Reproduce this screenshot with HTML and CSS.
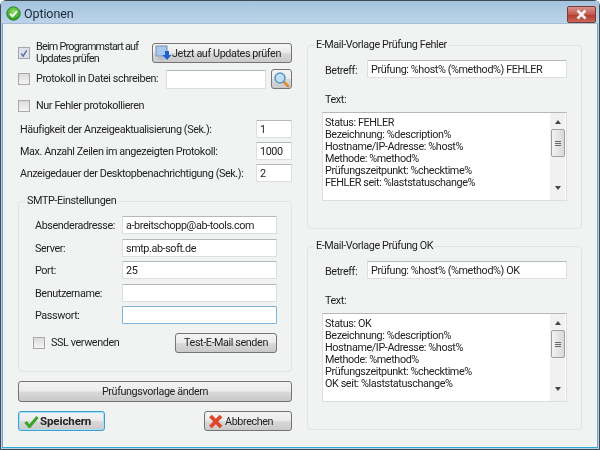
FILE: index.html
```html
<!DOCTYPE html>
<html lang="de">
<head>
<meta charset="utf-8">
<title>Optionen</title>
<link rel="stylesheet" href="styles.css">
</head>
<body>
<div class="window">
  <header class="titlebar">
    <svg class="title-icon" width="15" height="15" viewBox="0 0 17 17"><defs><radialGradient id="g1" cx="50%" cy="35%" r="65%"><stop offset="0" stop-color="#8fe05a"/><stop offset="1" stop-color="#1f9a1f"/></radialGradient></defs><circle cx="8.5" cy="8.5" r="7.6" fill="url(#g1)" stroke="#2b7a2b"/><path d="M4.6 8.8l2.8 2.9 5-6" fill="none" stroke="#fff" stroke-width="2.2"/></svg>
    <span class="title-text">Optionen</span>
    <div class="close-btn"><svg width="13" height="11" viewBox="0 0 13 11"><path d="M2.5 1.500l8 8M10.500 1.500l-8 8" stroke="#f2f2f2" stroke-width="2.600"/></svg></div>
  </header>
  <main class="client">
    <section class="col-left">
      <div class="row row-updates">
        <span class="check checked"><svg width="11" height="11" viewBox="0 0 11 11"><path d="M2.500 5.500l2 3 4-6.500" fill="none" stroke="#5a6ea8" stroke-width="1.500"/></svg></span>
        <span class="label updates-label">Beim Programmstart auf<br>Updates prüfen</span>
        <button class="btn btn-updates"><svg width="17" height="17" viewBox="0 0 17 17"><rect x="1" y="1" width="11" height="10" fill="#a9c8ee" stroke="#7a8fb0"/><rect x="3" y="12" width="7" height="3" fill="#b8bec8"/><path d="M10 6h4v4h2.500l-4.500 5-4.500-5H10z" fill="#1f62d0"/></svg><span>Jetzt auf Updates prüfen</span></button>
      </div>
      <div class="row row-log">
        <span class="check"></span>
        <span class="label log-label">Protokoll in Datei schreiben:</span>
        <div class="input log-input"></div>
        <button class="btn btn-search"><svg width="17" height="17" viewBox="0 0 17 17"><path d="M10.500 10.500l4.500 4.500" stroke="#e08a30" stroke-width="2.600" stroke-linecap="round"/><circle cx="7" cy="7" r="5" fill="#bfe0f5" stroke="#5f93c0" stroke-width="1.500"/></svg></button>
      </div>
      <div class="row row-errors">
        <span class="check"></span>
        <span class="label">Nur Fehler protokollieren</span>
      </div>
      <div class="setting s1"><span class="label">Häufigkeit der Anzeigeaktualisierung (Sek.):</span><div class="input num">1</div></div>
      <div class="setting s2"><span class="label">Max. Anzahl Zeilen im angezeigten Protokoll:</span><div class="input num">1000</div></div>
      <div class="setting s2"><span class="label">Anzeigedauer der Desktopbenachrichtigung (Sek.):</span><div class="input num">2</div></div>
      <fieldset class="group smtp">
        <legend>SMTP-Einstellungen</legend>
        <div class="field"><span class="label">Absenderadresse:</span><div class="input wide">a-breitschopp@ab-tools.com</div></div>
        <div class="field"><span class="label">Server:</span><div class="input wide">smtp.ab-soft.de</div></div>
        <div class="field"><span class="label">Port:</span><div class="input wide">25</div></div>
        <div class="field"><span class="label">Benutzername:</span><div class="input wide"></div></div>
        <div class="field"><span class="label">Passwort:</span><div class="input wide focus"></div></div>
        <div class="ssl-row">
          <span class="check"></span>
          <span class="label">SSL verwenden</span>
          <button class="btn btn-test">Test-E-Mail senden</button>
        </div>
      </fieldset>
      <button class="btn btn-template">Prüfungsvorlage ändern</button>
      <div class="actions">
        <button class="btn btn-save"><svg width="15" height="13" viewBox="0 0 15 13"><path d="M1.500 7l4 4.500 8-9.500" fill="none" stroke="#3aa52d" stroke-width="3"/></svg>Speichern</button>
        <button class="btn btn-cancel"><svg width="15" height="15" viewBox="0 0 15 15"><path d="M2.500 2l10.500 11M13 2L2.500 13" stroke="#e0452a" stroke-width="3.800"/></svg>Abbrechen</button>
      </div>
    </section>
    <section class="col-right">
      <fieldset class="group mail">
        <legend>E-Mail-Vorlage Prüfung Fehler</legend>
        <div class="subject"><span class="label">Betreff:</span><div class="input subject-input">Prüfung: %host% (%method%) FEHLER</div></div>
        <div class="label text-label">Text:</div>
        <div class="memo">
          <div class="memo-text">Status: FEHLER<br>Bezeichnung: %description%<br>Hostname/IP-Adresse: %host%<br>Methode: %method%<br>Prüfungszeitpunkt: %checktime%<br>FEHLER seit: %laststatuschange%</div>
          <div class="scroll"><span class="arrow up"></span><span class="thumb"><i></i><i></i><i></i></span><span class="arrow down"></span></div>
        </div>
      </fieldset>
      <fieldset class="group mail mail-ok">
        <legend>E-Mail-Vorlage Prüfung OK</legend>
        <div class="subject"><span class="label">Betreff:</span><div class="input subject-input">Prüfung: %host% (%method%) OK</div></div>
        <div class="label text-label">Text:</div>
        <div class="memo">
          <div class="memo-text">Status: OK<br>Bezeichnung: %description%<br>Hostname/IP-Adresse: %host%<br>Methode: %method%<br>Prüfungszeitpunkt: %checktime%<br>OK seit: %laststatuschange%</div>
          <div class="scroll"><span class="arrow up"></span><span class="thumb"><i></i><i></i><i></i></span><span class="arrow down"></span></div>
        </div>
      </fieldset>
    </section>
  </main>
</div>
</body>
</html>
```
FILE: styles.css
```css
* { box-sizing: border-box; }
html, body { margin: 0; padding: 0; }
body { width: 600px; height: 450px; overflow: hidden; background: #fff; font-family: Roboto, "Liberation Sans", Arial, sans-serif; font-size: 10.8px; letter-spacing: -0.4px; color: #222; }
.window { width: 600px; height: 450px; display: flex; flex-direction: column; background: #b7d0e8; border: 1px solid #3c4a52; border-radius: 6px 6px 0 0; padding: 0 1px 1px; filter: blur(0.3px); }
.titlebar { height: 22px; flex: none; display: flex; align-items: center; background: linear-gradient(#a5c3de, #bcd4ea); margin: 0 -1px; padding: 0 3px 0 5px; }
.title-icon { margin-right: 3px; margin-top: 2px; }
.title-text { font-size: 12.500px; letter-spacing: -0.1px; color: #1a2a3a; margin-top: 2px; }
.close-btn { margin-left: auto; width: 29px; height: 17px; margin-top: 5px; display: flex; align-items: center; justify-content: center; background: linear-gradient(#d8938b, #c2584c 50%, #b23a2e 55%, #c9685c); border: 1px solid #7a3a36; border-radius: 2px; }
.client { flex: 1; display: flex; gap: 15px; padding: 19px 15px 0 15px; background: #f1f3f3; border: 1px solid #6fa6cf; border-top-color: #a8bdd0; border-bottom-color: #2aa9d8; }
.col-left { width: 274px; flex: none; display: flex; flex-direction: column; }
.col-right { width: 275px; flex: none; display: flex; flex-direction: column; margin-top: -4px; }
.label { white-space: nowrap; line-height: 12px; }
.row { display: flex; align-items: center; }
.check { width: 12px; height: 12px; flex: none; border: 1px solid #a8a8a8; background: linear-gradient(#dcdcdc, #f4f4f4); display: flex; align-items: center; justify-content: center; }
.checked { background: #dde2ea; }
.input { height: 19px; background: #fff; border: 1px solid #dcdfe2; border-top-color: #b4b8bc; border-radius: 1px; padding: 2px 3px 0 3px; line-height: 13px; white-space: nowrap; }
.btn { font: inherit; letter-spacing: inherit; color: #222; padding: 0; height: 20px; white-space: nowrap; display: flex; align-items: center; justify-content: center; background: linear-gradient(#f4f4f4, #ebebeb 48%, #d9d9d9 52%, #c9c9c9); border: 1px solid #757575; border-radius: 3px; }
.row-updates { height: 20px; }
.updates-label { margin-left: 6px; width: 116px; letter-spacing: -0.75px; }
.btn-updates { width: 140px; flex: none; justify-content: flex-start; padding-left: 2px; letter-spacing: -0.4px; }
.btn-updates svg { flex: none; }
.row-log { height: 20px; margin-top: 6px; }
.log-label { margin-left: 6px; width: 130px; }
.log-input { width: 100px; margin-right: 5px; flex: none; }
.btn-search { width: 21px; flex: none; }
.row-errors { height: 14px; margin-top: 10px; }
.row-errors .label { margin-left: 6px; }
.setting { display: flex; align-items: center; justify-content: space-between; padding-left: 2px; height: 18px; }
.setting .label { padding-top: 2px; }
.s1 { margin-top: 7px; }
.s2 { margin-top: 4px; }
.num { width: 36px; height: 18px; }
.group { margin: 0; border: 1px solid #dfe3e6; border-radius: 4px; min-width: 0; }
.group legend { padding: 0 2px; line-height: 12px; }
.smtp { height: 177px; margin-top: 13px; padding: 9px 14px 0 16px; }
.smtp legend { margin-left: -10px; }
.field { display: flex; align-items: center; height: 18px; margin-bottom: 4.500px; }
.field .label { width: 87px; flex: none; padding-top: 2px; }
.wide { width: 155px; height: 18px; }
.focus { border-color: #7fb4d8; }
.ssl-row { display: flex; align-items: center; margin-top: 8.500px; height: 20px; margin-left: -2px; }
.ssl-row .label { margin-left: 6px; }
.btn-test { width: 102px; margin-left: auto; }
.btn-template { width: 274px; height: 21px; margin-top: 9px; flex: none; }
.actions { display: flex; justify-content: space-between; margin-top: 9px; }
.btn-save { width: 87px; justify-content: flex-start; padding-left: 5px; font-weight: bold; font-size: 11.500px; letter-spacing: -0.1px; border-color: #3c9ed0; box-shadow: inset 0 0 0 1px #a8e0f5; }
.btn-save svg { margin-right: 1px; }
.btn-cancel { width: 88px; justify-content: flex-start; padding-left: 3px; }
.btn-cancel svg { margin-right: 2px; }
.mail { height: 190px; padding: 9px 14px 0 14px; }
.mail legend { margin-left: -8px; }
.mail-ok { margin-top: 11px; }
.subject { display: flex; align-items: center; }
.subject .label { padding-left: 3px; width: 45px; flex: none; padding-top: 3px; }
.subject-input { width: 200px; height: 18px; }
.text-label { padding-left: 3px; margin-top: 16px; }
.memo { display: flex; width: 245px; height: 89px; margin-top: 6px; background: #fff; border: 1px solid #dcdfe2; border-top-color: #b4b8bc; }
.memo-text { flex: 1; padding: 4px 0 0 2px; line-height: 12.100px; }
.scroll { width: 15px; margin-right: 1px; display: flex; flex-direction: column; align-items: center; background: #f1f1f1; }
.arrow { width: 0; height: 0; border-left: 3px solid transparent; border-right: 3px solid transparent; }
.up { border-bottom: 4px solid #444; margin-top: 7px; }
.down { border-top: 4px solid #444; margin-top: 29px; }
.thumb { width: 14px; height: 28px; margin-top: 5px; background: linear-gradient(90deg, #f2f2f2, #d8d8d8); border: 1px solid #a0a0a0; border-radius: 2px; display: flex; flex-direction: column; align-items: center; justify-content: center; gap: 1px; }
.thumb i { display: block; width: 6px; height: 1px; background: #666; }
```
